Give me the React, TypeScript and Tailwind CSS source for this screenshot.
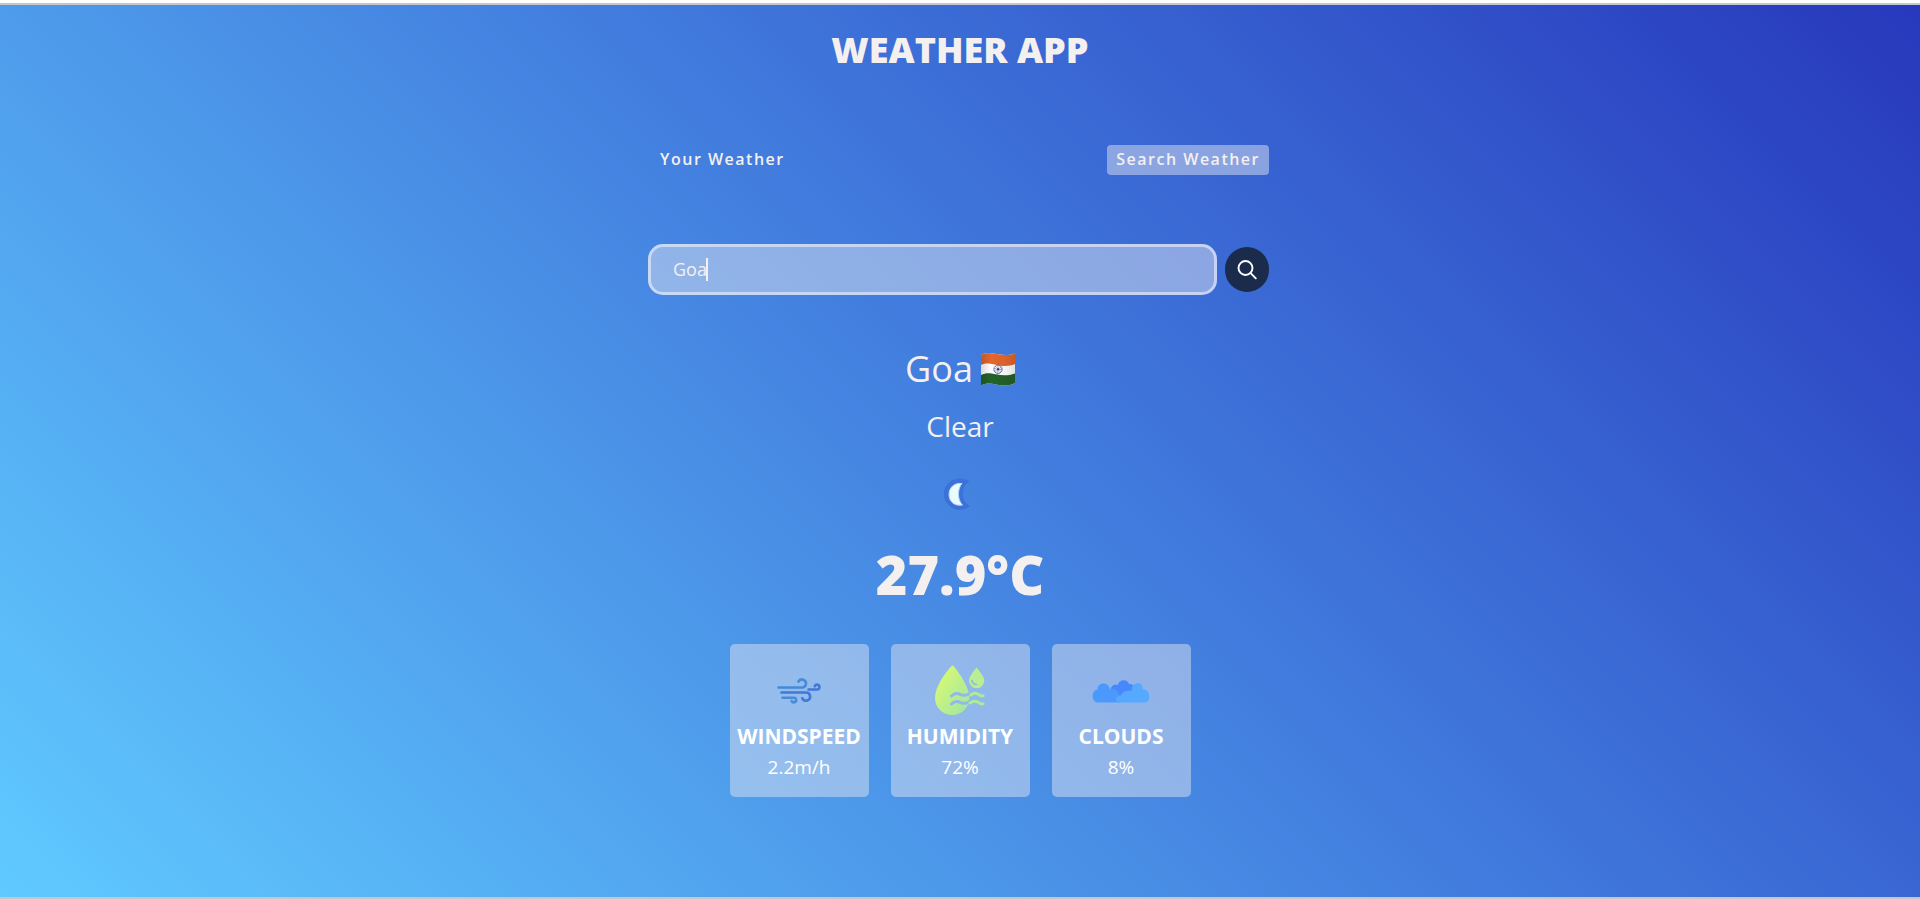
import { useState, type ReactNode } from "react";

function FlagIndia() {
  return (
    <svg viewBox="0 0 34 33" className="h-[33px] w-[34px]" role="img" aria-label="India">
      <defs>
        <clipPath id="flag">
          <path d="M0 2.5C3-.3 8-.3 13 .5s12 3 21 0V30c-6 3-13 3-19 1.500S5 30 0 32.500Z" />
        </clipPath>
        <linearGradient id="shade" x1="0" x2="1">
          <stop offset="0" stopColor="#000" stopOpacity=".15" />
          <stop offset=".3" stopColor="#000" stopOpacity="0" />
          <stop offset=".7" stopColor="#000" stopOpacity=".04" />
          <stop offset="1" stopColor="#000" stopOpacity=".12" />
        </linearGradient>
      </defs>
      <g clipPath="url(#flag)">
        <rect width="34" height="33" fill="#fff" />
        <path d="M0-3H34V11c-7 3-13 2-19 .7S5 9.500 0 12Z" fill="#e4662c" />
        <path d="M0 22c5-2.500 9-2 15-.7s12 1.800 19-.8V34H0Z" fill="#236329" />
        <path d="M0-3H34V34H0Z" fill="url(#shade)" />
      </g>
      <g fill="none" stroke="#5d5f95">
        <circle cx="17" cy="16.300" r="4.200" strokeWidth=".8" />
        <circle cx="17" cy="16.300" r="2.600" strokeWidth="3" strokeDasharray=".5 .9" opacity=".7" />
      </g>
      <circle cx="17" cy="16.300" r="1.200" fill="#3a3c7c" />
    </svg>
  );
}

function Moon() {
  return (
    <svg viewBox="0 0 50 50" className="size-[50px]" role="img" aria-label="Clear night">
      <path
        d="M34 12.500C25 6.500 9.500 11 9.500 25S25 44 34.500 37C26 34 24.500 17 34 12.500Z"
        fill="#3b71d8"
        stroke="#3b71d8"
        strokeWidth="1"
        strokeLinejoin="round"
      />
      <path
        d="M27 14.500C20 13.500 14 18 14 25.500S20 37.500 27.500 36C22 31 22.500 19 27 14.500Z"
        fill="#e9fbff"
        stroke="#a9d8f8"
        strokeWidth="1"
      />
    </svg>
  );
}

function WindIcon() {
  return (
    <svg viewBox="0 0 50 50" className="size-[50px]" fill="none" strokeWidth="2.600" strokeLinecap="round" aria-hidden="true">
      <g stroke="#468bd8">
        <path d="M4.500 22.500H28a4 4 0 1 0-3.600-5.800" />
        <path d="M8.500 32.800H20a2.300 2.300 0 1 1-2.300 3.200" />
      </g>
      <g stroke="#4277d6">
        <path d="M7.500 27.500H32a4.100 4.100 0 1 1-3.700 5.800" />
        <path d="M34.500 24.500H43a2.400 2.400 0 1 0-2.200-3.300" />
      </g>
    </svg>
  );
}

function HumidityIcon() {
  return (
    <svg viewBox="0 0 50 50" className="size-[50px]" aria-hidden="true">
      <defs>
        <linearGradient id="lime" x1="0" y1="0" x2="1" y2="1">
          <stop offset="0" stopColor="#e0fd68" />
          <stop offset="1" stopColor="#9fe4a8" />
        </linearGradient>
        <mask id="cut" maskUnits="userSpaceOnUse" x="0" y="0" width="50" height="50">
          <rect width="50" height="50" fill="#fff" />
          <path
            d="M16.500 31Q20.500 27 25 29.300T35 28.500M16.500 39Q20.500 35 25 37.300T35 36.500"
            fill="none"
            stroke="#000"
            strokeWidth="3"
            strokeLinecap="round"
          />
        </mask>
      </defs>
      <path
        d="M16.500 1Q18 0 19 1.500C25 9 34.500 23 34.500 32.500C34.500 42 27 50 17.500 50S0 43 0 33C0 22 10 8 16.500 1Z"
        fill="url(#lime)"
        mask="url(#cut)"
      />
      <path
        d="M36 30Q39.500 27 43 29.300T48 30.800M35 38Q39.500 35 43 37.300T48 38.800"
        fill="none"
        stroke="#aceb97"
        strokeWidth="3"
        strokeLinecap="round"
      />
      <path d="M41.500 2.500C44 5.500 49.300 12 49.300 15.500A7.600 7.600 0 0 1 34 15.500C34 12 39 5.500 41.500 2.500Z" fill="#b9ee93" />
      <path d="M37 15.500q.5 3.800 4.500 4" fill="none" stroke="#8cb8d8" strokeWidth="1.600" strokeLinecap="round" />
    </svg>
  );
}

function CloudsIcon() {
  return (
    <svg viewBox="0 0 58 50" className="h-[50px] w-[58px]" aria-hidden="true">
      <path d="M19 26a5 5 0 0 1 7-6 5.700 5.700 0 0 1 11-1 4.500 4.500 0 0 1 5 3V32H20Z" fill="#4788fd" />
      <path
        d="M6 37.500C-1 37.500-1 25 5.500 24.500 5 17 17 16 18 24.500c8-2 10 5 10 13Z"
        fill="#4c99fd"
      />
      <path
        d="M27 37.500C22 37 23 30 29 30.500 30 26 36 25 40 26 38 17 51 15 51 24.500 59 24 59 37.500 53 37.500Z"
        fill="#55aaff"
      />
    </svg>
  );
}

function Stat({ icon, label, value }: { icon: ReactNode; label: string; value: string }) {
  return (
    <article className="flex h-[153px] w-[139px] flex-col items-center rounded-[5px] bg-[#dbe2ef]/50 pt-[21px] text-white">
      {icon}
      <h3 className="mt-[6px] text-[21px] leading-[30px] font-bold">{label}</h3>
      <p className="text-[19px] leading-8">{value}</p>
    </article>
  );
}

export default function App() {
  const [city, setCity] = useState("Goa");
  return (
    <div className="flex min-h-screen flex-col border-t-3 border-white font-['Open_Sans','Noto_Sans',sans-serif] text-[#f4f0f0]">
      <main className="flex flex-1 flex-col items-center border-y-2 border-[#c4c8cc] bg-[linear-gradient(45deg,#60caff_0%,#4078dc_56%,#2738bc_100%)] bg-origin-border px-4 pt-5">
        <h1 className="text-4xl leading-[50px] font-extrabold">WEATHER APP</h1>

        <div className="mt-[70px] w-full max-w-[624px] pr-[3px]">
          <nav className="flex justify-between">
            <button type="button" className="h-[30px] rounded px-3 pb-[2px] text-base font-semibold tracking-[1.5px]">
              Your Weather
            </button>
            <button type="button" className="h-[30px] rounded bg-[#dbe2ef]/50 px-[9px] pb-[2px] text-base font-semibold tracking-[1.5px]">
              Search Weather
            </button>
          </nav>

          <form className="mt-[69px] flex items-center gap-2" onSubmit={(e) => e.preventDefault()}>
            <div className="relative flex-1">
              <input
                aria-label="Search for city"
                value={city}
                onChange={(e) => setCity(e.target.value)}
                className="h-[51px] w-full rounded-[15px] border-3 border-white/50 bg-[#dbe2ef]/50 px-[22px] pb-[2px] text-lg font-medium outline-none"
              />
              <span className="absolute top-[14px] left-[58px] h-[23px] w-[2px] bg-[#f4f0f0]" />
            </div>
            <button type="submit" aria-label="Search" className="flex h-[45px] w-[44px] items-center justify-center rounded-full bg-[#1a2b4b]">
              <svg viewBox="0 0 20 20" className="size-5" fill="none" stroke="#fff" strokeWidth="1.900" strokeLinecap="round">
                <circle cx="8.500" cy="8" r="7" />
                <path d="m13.600 13.100 5.200 5.200" />
              </svg>
            </button>
          </form>
        </div>

        <section className="mt-[50px] flex flex-col items-center">
          <div className="flex items-center gap-2">
            <h2 className="text-4xl leading-[48px]">Goa</h2>
            <FlagIndia />
          </div>
          <p className="mt-[13px] text-[28px] leading-10">Clear</p>
          <div className="mt-[23px]">
            <Moon />
          </div>
          <p className="mt-[19px] text-[54px] leading-[72px] font-extrabold">27.9°C</p>
          <div className="mt-[34px] flex flex-wrap justify-center gap-[22px]">
            <Stat icon={<WindIcon />} label="WINDSPEED" value="2.2m/h" />
            <Stat icon={<HumidityIcon />} label="HUMIDITY" value="72%" />
            <Stat icon={<CloudsIcon />} label="CLOUDS" value="8%" />
          </div>
        </section>
      </main>
    </div>
  );
}
